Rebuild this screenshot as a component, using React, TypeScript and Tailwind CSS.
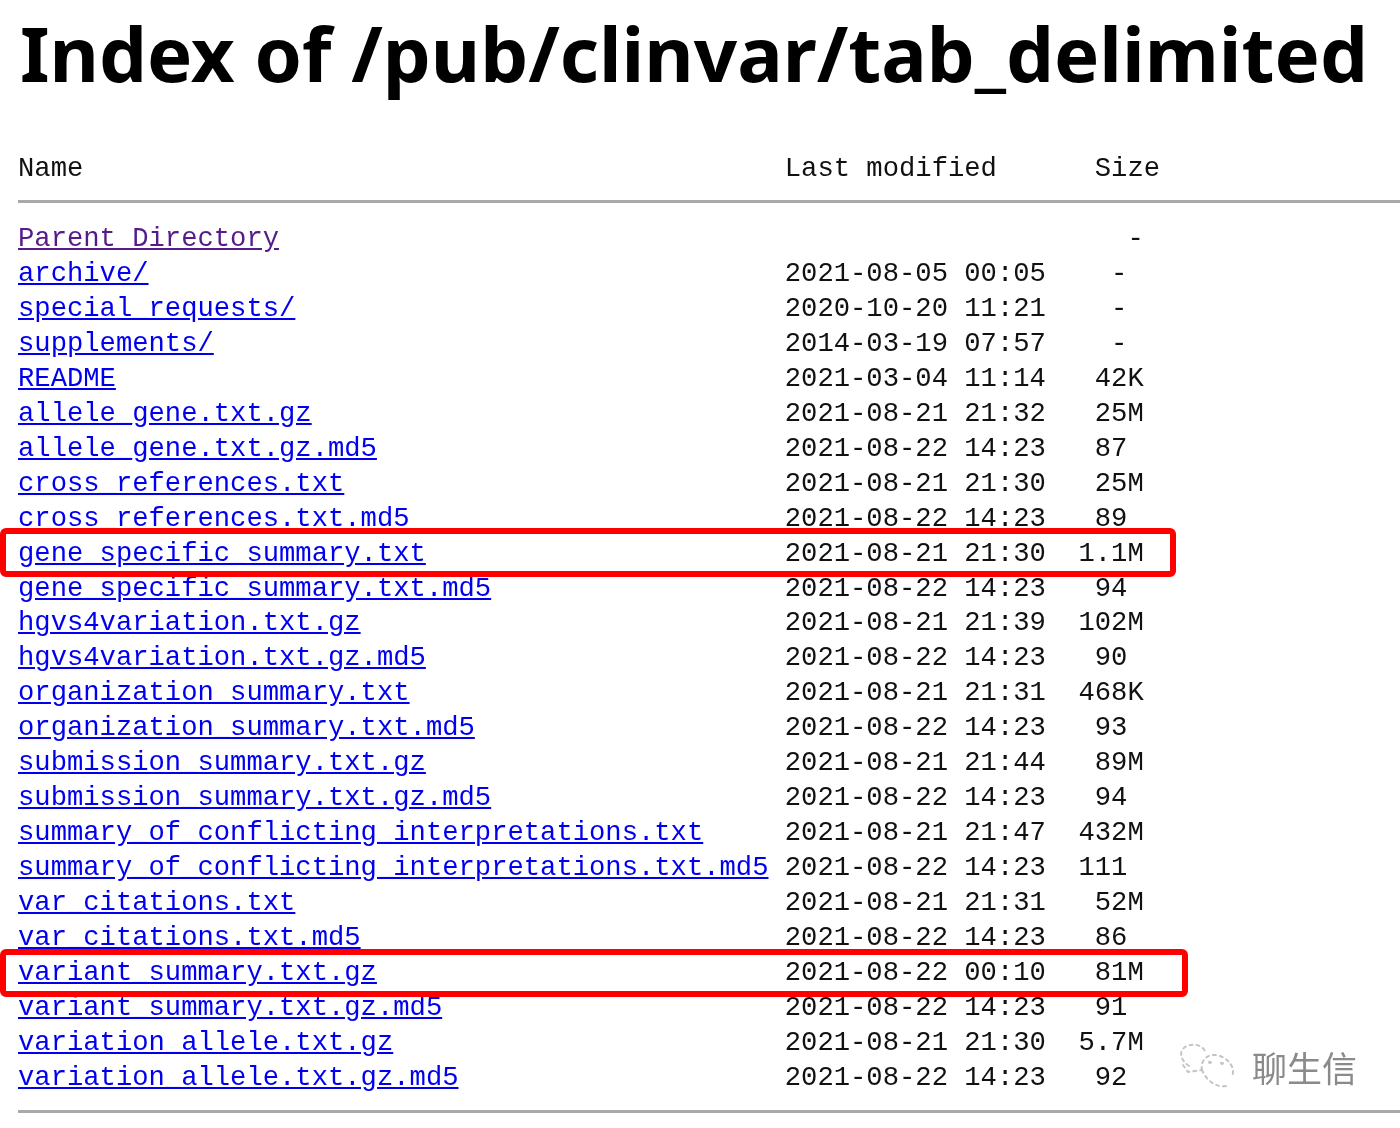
const files = [
  ["Parent Directory", "", "   -", true],
  ["archive/", "2021-08-05 00:05", "  -"],
  ["special_requests/", "2020-10-20 11:21", "  -"],
  ["supplements/", "2014-03-19 07:57", "  -"],
  ["README", "2021-03-04 11:14", " 42K"],
  ["allele_gene.txt.gz", "2021-08-21 21:32", " 25M"],
  ["allele_gene.txt.gz.md5", "2021-08-22 14:23", " 87"],
  ["cross_references.txt", "2021-08-21 21:30", " 25M"],
  ["cross_references.txt.md5", "2021-08-22 14:23", " 89"],
  ["gene_specific_summary.txt", "2021-08-21 21:30", "1.1M"],
  ["gene_specific_summary.txt.md5", "2021-08-22 14:23", " 94"],
  ["hgvs4variation.txt.gz", "2021-08-21 21:39", "102M"],
  ["hgvs4variation.txt.gz.md5", "2021-08-22 14:23", " 90"],
  ["organization_summary.txt", "2021-08-21 21:31", "468K"],
  ["organization_summary.txt.md5", "2021-08-22 14:23", " 93"],
  ["submission_summary.txt.gz", "2021-08-21 21:44", " 89M"],
  ["submission_summary.txt.gz.md5", "2021-08-22 14:23", " 94"],
  ["summary_of_conflicting_interpretations.txt", "2021-08-21 21:47", "432M"],
  ["summary_of_conflicting_interpretations.txt.md5", "2021-08-22 14:23", "111"],
  ["var_citations.txt", "2021-08-21 21:31", " 52M"],
  ["var_citations.txt.md5", "2021-08-22 14:23", " 86"],
  ["variant_summary.txt.gz", "2021-08-22 00:10", " 81M"],
  ["variant_summary.txt.gz.md5", "2021-08-22 14:23", " 91"],
  ["variation_allele.txt.gz", "2021-08-21 21:30", "5.7M"],
  ["variation_allele.txt.gz.md5", "2021-08-22 14:23", " 92"],
] as const;

function Watermark() {
  return (
    <div className="absolute left-[1178px] top-[1042px] flex items-center gap-[18px] text-[#8a8a8a]">
      <svg width="56" height="48" viewBox="0 0 56 48" fill="none" stroke="#c4c4c4" strokeWidth="2" strokeDasharray="3 4" strokeLinecap="round">
        <path d="M11 24 C2 18 0 8 9 4 C16 1 24 3 27 9" />
        <path d="M5 23 L10 30 L24 28" />
        <path d="M24 28 C22 18 30 12 38 13 C50 15 58 26 54 34" />
        <path d="M24 28 C28 38 38 46 48 44" />
        <circle cx="32" cy="20" r="1" />
        <circle cx="44" cy="21" r="1" />
      </svg>
      <span className="text-[35px] leading-none font-['Noto_Sans_CJK_SC',sans-serif]">聊生信</span>
    </div>
  );
}

export default function App() {
  return (
    <div className="relative h-[1128px] w-[1400px] overflow-hidden bg-white text-black blur-[0.4px]">
      <h1 className="pl-[20px] pt-[5px] h-[151px] text-[76px] leading-[96px] font-bold whitespace-nowrap font-['Noto_Sans',sans-serif]">
        Index of /pub/clinvar/tab_delimited
      </h1>
      <div className="pl-[18px] text-[27.2px] leading-[35px] whitespace-pre font-['Liberation_Mono',monospace]">
        <div className="flex h-[35px] text-[#111]">
          <span className="w-[47ch]">Name</span>
          <span className="w-[18ch]">Last modified</span>
          <span>{" Size"}</span>
        </div>
        <hr className="mt-[14px] mb-[1px] h-[3px] border-0 bg-[#a9a9a9]" />
        <div className="pt-[17px]">
          {files.map(([name, date, size, visited]) => (
            <div key={name} className="flex h-[34.96px] text-[#111]">
              <span className="w-[47ch]">
                <a href="#" className={visited ? "text-[#551a8b] underline" : "text-[#0000ee] underline"}>{name}</a>
              </span>
              <span className="w-[18ch]">{date}</span>
              <span>{size}</span>
            </div>
          ))}
        </div>
        <hr className="mt-[15px] h-[3px] border-0 bg-[#a9a9a9]" />
      </div>
      <div className="absolute left-0 top-[528px] h-[49px] w-[1176px] rounded-[6px] border-[6px] border-[#fe0000]" />
      <div className="absolute left-0 top-[949px] h-[48px] w-[1188px] rounded-[6px] border-[6px] border-[#fe0000]" />
      <Watermark />
    </div>
  );
}
